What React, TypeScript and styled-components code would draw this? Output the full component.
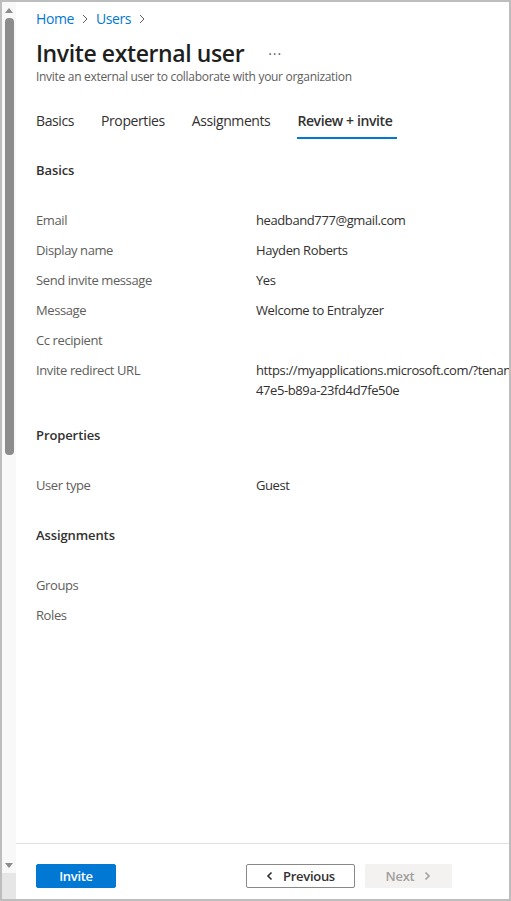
import styled, { createGlobalStyle } from "styled-components";

const GlobalStyle = createGlobalStyle`
  html, body {
    margin: 0;
    padding: 0;
    background: #ffffff;
  }
  body {
    font-family: "Open Sans", "Liberation Sans", sans-serif;
    color: #323130;
  }
`;

const Frame = styled.div`
  box-sizing: border-box;
  width: 511px;
  height: 901px;
  border: 2px solid #bdbdbd;
  display: flex;
  overflow: hidden;
`;

const ScrollBar = styled.div`
  width: 14px;
  flex-shrink: 0;
  display: flex;
  flex-direction: column;
  align-items: center;
  background: #f8f8f8;
`;

const ArrowUp = styled.div`
  margin-top: 6px;
  width: 0;
  height: 0;
  border-left: 4px solid transparent;
  border-right: 4px solid transparent;
  border-bottom: 5px solid #8c8c8c;
`;

const ArrowDown = styled.div`
  margin-top: auto;
  margin-bottom: 5px;
  width: 0;
  height: 0;
  border-left: 4px solid transparent;
  border-right: 4px solid transparent;
  border-top: 5px solid #8c8c8c;
`;

const Thumb = styled.div`
  margin-top: 5px;
  width: 9px;
  height: 437px;
  border-radius: 4px;
  background: #8c8c8c;
`;

const ScrollCorner = styled.div`
  width: 14px;
  height: 26px;
  background: #e6e6e6;
`;

const Main = styled.div`
  flex: 1;
  min-width: 0;
  display: flex;
  flex-direction: column;
`;

const Content = styled.div`
  flex: 1;
  overflow: hidden;
  padding: 7px 0 0 20px;
`;

const Breadcrumb = styled.nav`
  display: flex;
  align-items: center;
  gap: 7px;
  font-size: 14px;
  line-height: 20px;
  letter-spacing: -0.4px;
`;

const Crumb = styled.a`
  color: #0078d4;
  text-decoration: none;
`;

const Chevron = styled.svg`
  width: 8px;
  height: 10px;
`;

const TitleRow = styled.div`
  display: flex;
  align-items: baseline;
  margin-top: 8px;
`;

const Title = styled.h1`
  margin: 0;
  font-size: 23px;
  line-height: 32px;
  font-weight: 600;
  letter-spacing: -0.4px;
  color: #201f1e;
`;

const More = styled.span`
  margin-left: 24px;
  font-size: 14px;
  color: #605e5c;
  letter-spacing: 1px;
  position: relative;
  top: -7px;
`;

const Subtitle = styled.p`
  margin: 0;
  font-size: 12px;
  line-height: 16px;
  letter-spacing: -0.3px;
  color: #605e5c;
`;

const Tabs = styled.div`
  display: flex;
  gap: 27px;
  margin-top: 26px;
`;

const Tab = styled.div<{ $active?: boolean }>`
  font-size: 14px;
  line-height: 20px;
  letter-spacing: -0.4px;
  padding: 0 ${(p) => (p.$active ? "5px" : "0")} 6px 0;
  color: #323130;
  font-weight: ${(p) => (p.$active ? 600 : 400)};
  border-bottom: 2px solid ${(p) => (p.$active ? "#0078d4" : "transparent")};
`;

const Section = styled.section<{ $gap: number }>`
  margin-top: ${(p) => p.$gap}px;
`;

const SectionTitle = styled.h2`
  margin: 0 0 30px;
  font-size: 13px;
  line-height: 20px;
  font-weight: 600;
  letter-spacing: -0.1px;
  color: #323130;
`;

const Row = styled.div`
  display: grid;
  grid-template-columns: 220px 1fr;
  min-height: 20px;
  margin-bottom: 10px;
  font-size: 13px;
  line-height: 20px;
  letter-spacing: -0.4px;
`;

const Label = styled.div`
  color: #605e5c;
`;

const Value = styled.div`
  color: #323130;
  overflow: hidden;
`;

const Line = styled.div`
  white-space: nowrap;
`;

const Footer = styled.div`
  flex-shrink: 0;
  height: 56px;
  border-top: 1px solid #e1dfdd;
  display: flex;
  align-items: flex-start;
  padding: 20px 0 0 20px;
  box-sizing: border-box;
`;

const Button = styled.button<{ $kind: "primary" | "default" | "disabled" }>`
  box-sizing: border-box;
  height: 24px;
  display: inline-flex;
  align-items: center;
  justify-content: center;
  gap: 10px;
  border-radius: 2px;
  font-family: inherit;
  font-size: 13px;
  font-weight: 600;
  letter-spacing: -0.3px;
  padding: 0;
  border: 1px solid
    ${(p) =>
      p.$kind === "primary" ? "#0078d4" : p.$kind === "default" ? "#8a8886" : "#f3f2f1"};
  background: ${(p) =>
    p.$kind === "primary" ? "#0078d4" : p.$kind === "default" ? "#ffffff" : "#f3f2f1"};
  color: ${(p) =>
    p.$kind === "primary" ? "#ffffff" : p.$kind === "default" ? "#323130" : "#a19f9d"};
`;

const InviteButton = styled(Button)`
  width: 80px;
  margin-right: 130px;
`;

const PrevButton = styled(Button)`
  width: 109px;
  margin-right: 10px;
`;

const NextButton = styled(Button)`
  width: 87px;
`;

const ChevronRight = () => (
  <Chevron viewBox="0 0 8 10">
    <path d="M2 1 L6 5 L2 9" fill="none" stroke="#605e5c" strokeWidth="1" />
  </Chevron>
);

const SmallChevron = ({ dir, color }: { dir: "left" | "right"; color: string }) => (
  <svg width="7" height="10" viewBox="0 0 7 10">
    <path
      d={dir === "left" ? "M5.5 1.5 L2 5 L5.5 8.5" : "M1.5 1.5 L5 5 L1.5 8.5"}
      fill="none"
      stroke={color}
      strokeWidth="1.6"
    />
  </svg>
);

const basics = [
  { label: "Email", value: ["headband777@gmail.com"] },
  { label: "Display name", value: ["Hayden Roberts"] },
  { label: "Send invite message", value: ["Yes"] },
  { label: "Message", value: ["Welcome to Entralyzer"] },
  { label: "Cc recipient", value: [] },
  {
    label: "Invite redirect URL",
    value: [
      "https://myapplications.microsoft.com/?tenantid=6a0f3b2c-91d4-",
      "47e5-b89a-23fd4d7fe50e",
    ],
  },
];

export default function App() {
  return (
    <>
      <GlobalStyle />
      <Frame>
        <ScrollBar>
          <ArrowUp />
          <Thumb />
          <ArrowDown />
          <ScrollCorner />
        </ScrollBar>
        <Main>
          <Content>
            <Breadcrumb>
              <Crumb>Home</Crumb>
              <ChevronRight />
              <Crumb>Users</Crumb>
              <ChevronRight />
            </Breadcrumb>
            <TitleRow>
              <Title>Invite external user</Title>
              <More>...</More>
            </TitleRow>
            <Subtitle>Invite an external user to collaborate with your organization</Subtitle>
            <Tabs>
              <Tab>Basics</Tab>
              <Tab>Properties</Tab>
              <Tab>Assignments</Tab>
              <Tab $active>Review + invite</Tab>
            </Tabs>

            <Section $gap={21}>
              <SectionTitle>Basics</SectionTitle>
              {basics.map((r) => (
                <Row key={r.label}>
                  <Label>{r.label}</Label>
                  <Value>
                    {r.value.map((v) => (
                      <Line key={v}>{v}</Line>
                    ))}
                  </Value>
                </Row>
              ))}
            </Section>

            <Section $gap={25}>
              <SectionTitle>Properties</SectionTitle>
              <Row>
                <Label>User type</Label>
                <Value>Guest</Value>
              </Row>
            </Section>

            <Section $gap={30}>
              <SectionTitle>Assignments</SectionTitle>
              <Row>
                <Label>Groups</Label>
                <Value />
              </Row>
              <Row>
                <Label>Roles</Label>
                <Value />
              </Row>
            </Section>
          </Content>
          <Footer>
            <InviteButton $kind="primary">Invite</InviteButton>
            <PrevButton $kind="default">
              <SmallChevron dir="left" color="#323130" />
              Previous
            </PrevButton>
            <NextButton $kind="disabled">
              Next
              <SmallChevron dir="right" color="#a19f9d" />
            </NextButton>
          </Footer>
        </Main>
      </Frame>
    </>
  );
}
